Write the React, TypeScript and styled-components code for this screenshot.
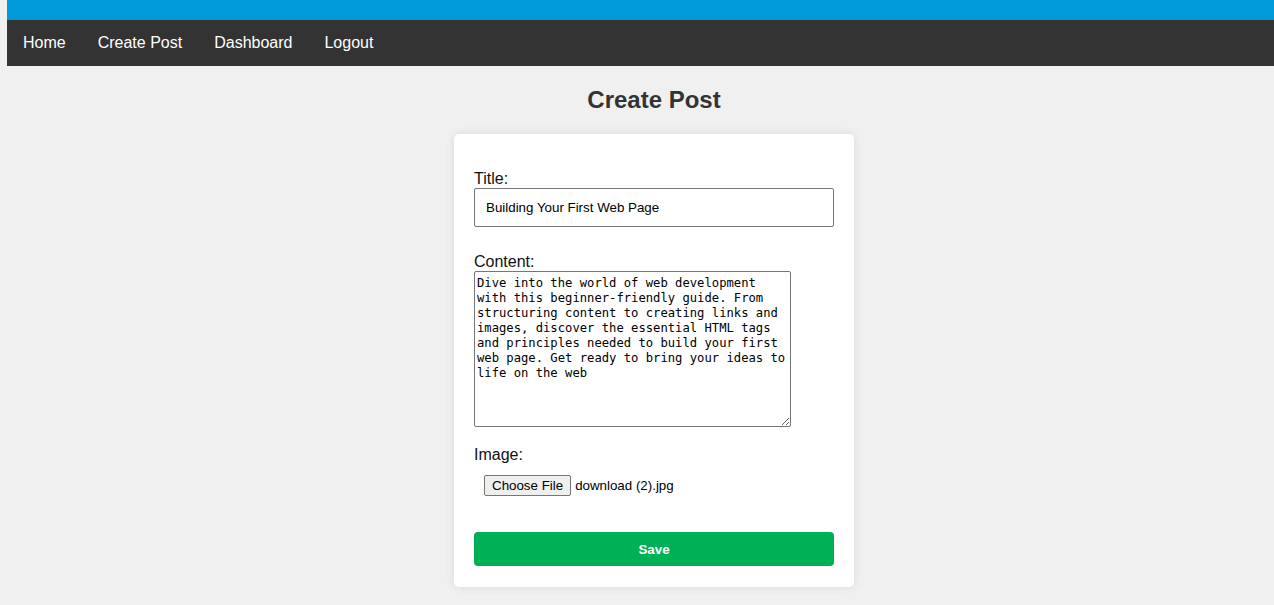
import React from "react";
import styled, { createGlobalStyle } from "styled-components";

const GlobalStyle = createGlobalStyle`
  html, body {
    margin: 0;
    padding: 0;
    background: #f0f0f0;
    font-family: "Liberation Sans", Arial, sans-serif;
  }
  * { box-sizing: border-box; }
`;

const Page = styled.div`
  padding-left: 7px;
  min-height: 605px;
`;

const TopBar = styled.div`
  height: 20px;
  background: #009ad9;
`;

const Nav = styled.nav`
  display: flex;
  height: 46px;
  background: #333333;
`;

const NavLink = styled.a`
  display: block;
  padding: 0 16px;
  line-height: 46px;
  color: #ffffff;
  font-size: 16px;
  text-decoration: none;
  cursor: pointer;
`;

const Main = styled.main`
  padding-left: 27px;
`;

const Heading = styled.h1`
  margin: 20px 0;
  text-align: center;
  font-size: 24px;
  line-height: 28px;
  font-weight: bold;
  color: #333333;
`;

const Card = styled.form`
  width: 400px;
  margin: 0 auto;
  background: #ffffff;
  border-radius: 5px;
  padding: 36px 20px 21px;
  box-shadow: 0 0 10px rgba(0, 0, 0, 0.1);
`;

const Group = styled.div<{ $gap: number }>`
  margin-top: ${(p) => p.$gap}px;
`;

const Label = styled.label`
  display: block;
  font-size: 16px;
  line-height: 18px;
  color: #111111;
`;

const TextInput = styled.input`
  display: block;
  width: 100%;
  height: 39px;
  padding: 0 11px;
  border: 1px solid #767676;
  border-radius: 2px;
  font-family: "Liberation Sans", Arial, sans-serif;
  font-size: 13.33px;
  color: #000000;
  background: #ffffff;
  outline: none;
`;

const TextArea = styled.textarea`
  display: block;
  width: 317px;
  height: 156px;
  padding: 4px 2px 2px;
  border: 1px solid #767676;
  border-radius: 2px;
  font-family: "DejaVu Sans Mono", "Liberation Mono", monospace;
  font-size: 12.2px;
  line-height: 15px;
  color: #000000;
  background: #ffffff;
  resize: both;
  outline: none;
`;

const FileRow = styled.div`
  display: flex;
  align-items: center;
  margin-top: 11px;
  padding-left: 10px;
  gap: 4px;
`;

const FileButton = styled.span`
  display: inline-flex;
  align-items: center;
  height: 21px;
  padding: 0 7px;
  border: 1px solid #767676;
  border-radius: 2px;
  background: #efefef;
  font-size: 13.33px;
  color: #000000;
`;

const FileName = styled.span`
  font-size: 13.33px;
  color: #000000;
`;

const SaveButton = styled.button`
  display: block;
  width: 100%;
  height: 34px;
  margin-top: 36px;
  border: none;
  border-radius: 4px;
  background: #00b057;
  color: #ffffff;
  font-family: "Liberation Sans", Arial, sans-serif;
  font-size: 13.33px;
  font-weight: bold;
  cursor: pointer;
`;

const content =
  "Dive into the world of web development with this beginner-friendly guide. From structuring content to creating links and images, discover the essential HTML tags and principles needed to build your first web page. Get ready to bring your ideas to life on the web";

export default function App() {
  return (
    <>
      <GlobalStyle />
      <Page>
        <TopBar />
        <Nav>
          <NavLink>Home</NavLink>
          <NavLink>Create Post</NavLink>
          <NavLink>Dashboard</NavLink>
          <NavLink>Logout</NavLink>
        </Nav>
        <Main>
          <Heading>Create Post</Heading>
          <Card onSubmit={(e) => e.preventDefault()}>
            <Group $gap={0}>
              <Label htmlFor="title">Title:</Label>
              <TextInput id="title" defaultValue="Building Your First Web Page" />
            </Group>
            <Group $gap={26}>
              <Label htmlFor="content">Content:</Label>
              <TextArea id="content" defaultValue={content} />
            </Group>
            <Group $gap={19}>
              <Label>Image:</Label>
              <FileRow>
                <FileButton>Choose File</FileButton>
                <FileName>download (2).jpg</FileName>
              </FileRow>
            </Group>
            <SaveButton type="submit">Save</SaveButton>
          </Card>
        </Main>
      </Page>
    </>
  );
}
